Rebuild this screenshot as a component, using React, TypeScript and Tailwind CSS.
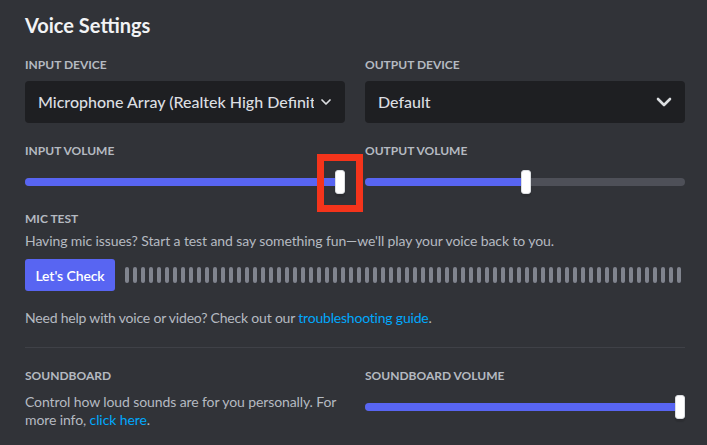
import React from "react"

const font = { fontFamily: 'Lato, "Noto Sans", sans-serif' }

function Label({ children }: { children: React.ReactNode }) {
  return (
    <div className="text-[12px] font-bold leading-[16px] uppercase tracking-[0px] text-[#b5bac1]">
      {children}
    </div>
  )
}

function Chevron({ size }: { size: number }) {
  return (
    <svg width={size} height={size} viewBox="0 0 24 24" fill="none" className="shrink-0">
      <path d="M6 9l6 6 6-6" stroke="#dbdee1" strokeWidth="2.6" strokeLinecap="round" strokeLinejoin="round" />
    </svg>
  )
}

function Select({ value, chevron, pr }: { value: string; chevron: number; pr: string }) {
  return (
    <div className={`flex h-[42px] items-center gap-1 rounded-[4px] bg-[#1e1f22] pl-[13px] ${pr}`}>
      <div className="min-w-0 flex-1 overflow-hidden whitespace-nowrap text-[16px] font-medium text-[#dbdee1]">{value}</div>
      <Chevron size={chevron} />
    </div>
  )
}

// fill = px from the track's left edge to the thumb's centre
function Slider({ fill }: { fill: number }) {
  return (
    <div className="relative flex h-[24px] items-center">
      <div className="h-[8px] w-full rounded-full bg-[#4e5058]" />
      <div className="absolute left-0 h-[8px] rounded-full bg-[#5865f2]" style={{ width: fill + 4 }} />
      <div
        className="absolute top-0 h-[24px] w-[10px] rounded-[3px] border border-[#dbdee1] bg-white shadow-[0_3px_1px_rgba(0,0,0,0.1)]"
        style={{ left: fill - 5 }}
      />
    </div>
  )
}

export default function App() {
  return (
    <div className="relative h-[445px] w-[707px] overflow-hidden bg-[#313338] pl-[25px] pr-[22px] pt-[13px]" style={font}>
      <h2 className="text-[20px] font-bold leading-[24px] text-[#f2f3f5]">Voice Settings</h2>

      <div className="mt-[20px] grid grid-cols-2 gap-x-[20px]">
        <div>
          <Label>Input Device</Label>
          <div className="mt-[8px]">
            <Select value="Microphone Array (Realtek High Definition Audio)" chevron={16} pr="pr-[11px]" />
          </div>
        </div>
        <div>
          <Label>Output Device</Label>
          <div className="mt-[8px]">
            <Select value="Default" chevron={24} pr="pr-[9px]" />
          </div>
        </div>

        <div className="mt-[20px]">
          <Label>Input Volume</Label>
          <div className="mt-[11px]">
            <Slider fill={315} />
          </div>
        </div>
        <div className="mt-[20px]">
          <Label>Output Volume</Label>
          <div className="mt-[11px]">
            <Slider fill={161} />
          </div>
        </div>
      </div>

      <div className="mt-[17px] tracking-[-0.1px]">
        <Label>Mic Test</Label>
        <p className="mt-[4px] text-[14px] leading-[20px] text-[#b5bac1]">
          Having mic issues? Start a test and say something fun—we'll play your voice back to you.
        </p>
        <div className="mt-[8px] flex items-center gap-[10px]">
          <button className="h-[32px] w-[90px] rounded-[3px] bg-[#5865f2] text-[14px] font-semibold text-white">
            Let's Check
          </button>
          <div className="flex gap-[4px]">
            {Array.from({ length: 70 }).map((_, i) => (
              <div key={i} className="h-[16px] w-[4px] rounded-full bg-[#80848e]" />
            ))}
          </div>
        </div>
        <p className="mt-[17px] text-[14px] leading-[20px] tracking-[-0.2px] text-[#b5bac1]">
          Need help with voice or video? Check out our <span className="text-[#00a8fc]">troubleshooting guide</span>.
        </p>
      </div>

      <div className="mt-[19px] h-px bg-[#3f4147]" />

      <div className="mt-[20px] grid grid-cols-2 gap-x-[20px]">
        <div>
          <Label>Soundboard</Label>
          <p className="mt-[9px] text-[14px] leading-[18px] tracking-[-0.1px] text-[#b5bac1]">
            Control how loud sounds are for you personally. For
            <br />
            more info, <span className="text-[#00a8fc]">click here</span>.
          </p>
        </div>
        <div>
          <Label>Soundboard Volume</Label>
          <div className="mt-[11px]">
            <Slider fill={315} />
          </div>
        </div>
      </div>

      {/* red annotation box */}
      <div className="absolute left-[317px] top-[154px] h-[58px] w-[46px] border-[7px] border-[#f4341b]" />
    </div>
  )
}
